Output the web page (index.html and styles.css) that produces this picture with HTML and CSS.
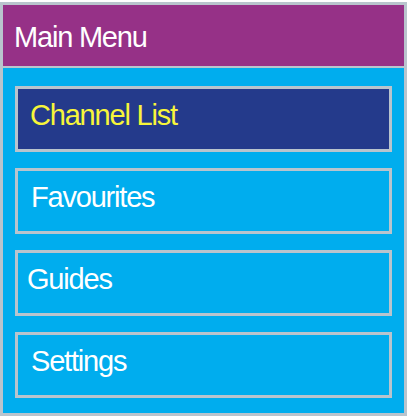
FILE: index.html
```html
<!DOCTYPE html>
<html lang="en">
<head>
    <meta charset="UTF-8">
    <meta name="viewport" content="width=device-width, initial-scale=1.0">
    <title>Main Menu</title>
    <link rel="stylesheet" href="styles.css">
</head>
<body>
    <div class="menu">
        <div class="menu-header">Main Menu</div>
        <ul class="menu-list">
            <li class="menu-item selected">Channel List</li>
            <li class="menu-item">Favourites</li>
            <li class="menu-item guides">Guides</li>
            <li class="menu-item">Settings</li>
        </ul>
    </div>
</body>
</html>
```

FILE: styles.css
```css
body {
    font-family: "Liberation Sans", Arial, sans-serif;
    background-color: #fff;
    margin: 0;
    padding: 2px 0 0 0;
}

.menu {
    width: 407px;
    border: 3px solid #b9c4cd;
    box-sizing: border-box;
    background-color: #00adee;
}

.menu-header {
    height: 63px;
    padding: 18px 0 0 11px;
    box-sizing: border-box;
    background-color: #963187;
    border-bottom: 2px solid #b9c4cd;
    color: #fff;
    font-size: 29px;
    line-height: 29px;
    letter-spacing: -1.2px;
}

.menu-list {
    list-style: none;
    margin: 0;
    padding: 18px 12px 15px 12px;
    display: flex;
    flex-direction: column;
    gap: 16px;
}

.menu-item {
    height: 66px;
    padding: 12px 0 0 13px;
    box-sizing: border-box;
    border: 3px solid #b9c4cd;
    color: #fff;
    font-size: 29px;
    line-height: 29px;
    letter-spacing: -1.2px;
}

.menu-item.selected {
    background-color: #243a8b;
    color: #f7f53a;
    padding-left: 12px;
}

.menu-item.guides {
    padding-left: 9px;
}
```
